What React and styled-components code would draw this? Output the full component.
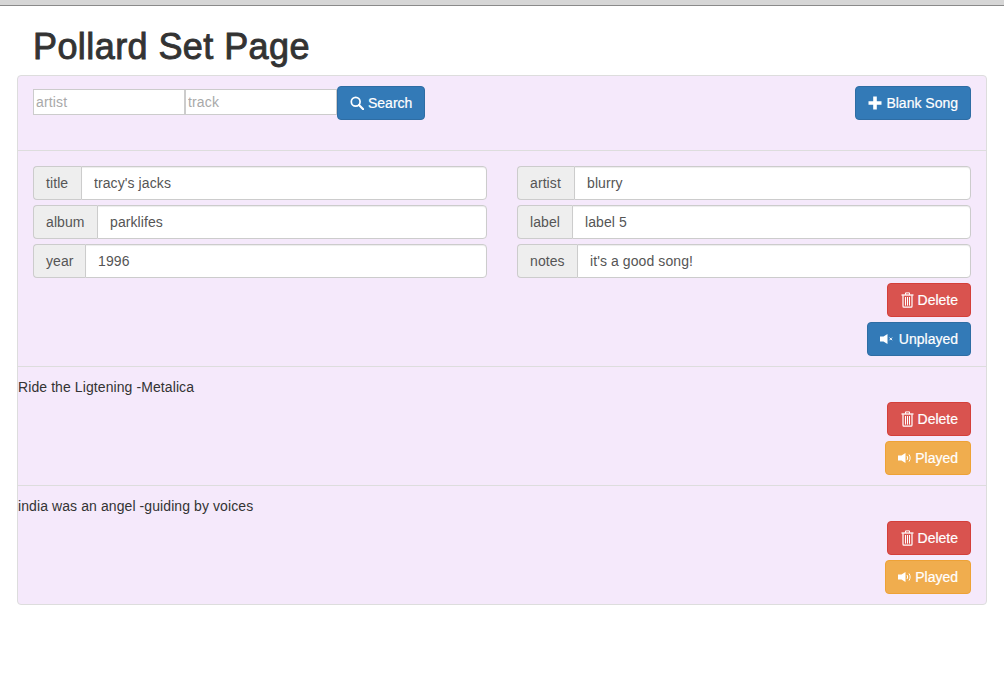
import React from "react";
import styled, { createGlobalStyle } from "styled-components";

const Global = createGlobalStyle`
  html, body { margin: 0; padding: 0; background: #fff; }
  body { font-family: "Liberation Sans", Arial, sans-serif; font-size: 14px; line-height: 20px; color: #333; letter-spacing: 0.09px; }
  * { box-sizing: border-box; }
`;

const TopBar = styled.div`
  height: 6px;
  background: #d6d6d6;
  border-bottom: 1px solid #8a8a8a;
`;
const Page = styled.div`
  padding: 0 17px;
  height: 676px;
`;
const Title = styled.h1`
  margin: 0;
  padding: 21px 16px 8px;
  font-size: 36px;
  line-height: 40px;
  font-weight: 400;
  color: #333;
  -webkit-text-stroke: 0.9px #333;
  letter-spacing: 0.42px;
`;
const Panel = styled.div`
  background: #f5e9fb;
  border: 1px solid #ddd;
  border-radius: 4px;
`;
const SearchSection = styled.section`
  display: flex;
  justify-content: space-between;
  align-items: flex-start;
  padding: 10px 15px 30px;
  border-bottom: 1px solid #ddd;
`;
const SearchForm = styled.div`
  display: flex;
  align-items: flex-start;
`;
const SearchInput = styled.input`
  width: 152px;
  height: 26px;
  margin-top: 3px;
  padding: 1px 2px;
  border: 1px solid #ccc;
  background: #fff;
  font: 14px "Liberation Sans", Arial, sans-serif;
  letter-spacing: 0.15px;
  outline: none;
  &::placeholder { color: #a9a9a9; opacity: 1; }
`;
const Song = styled.section`
  padding: 10px 15px 10px;
  border-bottom: ${p => (p.$last ? "none" : "1px solid #ddd")};
`;
const EditSong = styled(Song)`
  padding: 15px 15px 10px;
`;
const SongLine = styled.div`
  margin: 0 -15px;
  height: 20px;
  color: #333;
`;
const Fields = styled.div`
  display: grid;
  grid-template-columns: 1fr 1fr;
  column-gap: 30px;
  row-gap: 5px;
`;
const Group = styled.div`
  display: flex;
  height: 34px;
`;
const Addon = styled.span`
  flex: none;
  width: ${p => p.$width}px;
  padding: 6px 0 6px 12px;
  background: #eee;
  border: 1px solid #ccc;
  border-right: none;
  border-radius: 4px 0 0 4px;
  color: #555;
`;
const Field = styled.input`
  flex: 1;
  min-width: 0;
  padding: 6px 12px;
  border: 1px solid #ccc;
  border-radius: 0 4px 4px 0;
  background: #fff;
  color: #555;
  font: 14px/20px "Liberation Sans", Arial, sans-serif;
  letter-spacing: 0.09px;
  box-shadow: inset 0 1px 1px rgba(0, 0, 0, 0.075);
  outline: none;
`;
const Actions = styled.div`
  display: flex;
  flex-direction: column;
  align-items: flex-end;
  gap: 5px;
  margin-top: 5px;
`;
const variants = {
  primary: ["#337ab7", "#2e6da4"],
  danger: ["#d9534f", "#d43f3a"],
  warning: ["#f0ad4e", "#eea236"],
};
const Button = styled.button`
  display: inline-flex;
  align-items: center;
  justify-content: center;
  gap: ${p => p.$gap ?? 4}px;
  height: 34px;
  padding: 0 12px;
  border: 1px solid ${p => variants[p.$variant][1]};
  border-radius: 4px;
  background: ${p => variants[p.$variant][0]};
  color: #fff;
  font: 14px/20px "Liberation Sans", Arial, sans-serif;
  -webkit-text-stroke: 0.2px #fff;
  white-space: nowrap;
`;

const Icon = styled.svg`
  display: block;
  flex: none;
`;
const SearchIcon = () => (
  <Icon width="14" height="14" viewBox="0 0 14 14" fill="none" stroke="#fff" strokeWidth="1.7">
    <circle cx="5.7" cy="5.7" r="4.4" />
    <path d="M9 9l4.2 4.2" strokeWidth="2.2" strokeLinecap="round" />
  </Icon>
);
const PlusIcon = () => (
  <Icon width="14" height="14" viewBox="0 0 14 14" fill="#fff">
    <path d="M5.2 .5h3.600v4.700h4.700v3.600H8.800v4.700H5.200V8.800H.5V5.200h4.700z" />
  </Icon>
);
const TrashIcon = () => (
  <Icon width="14" height="16" viewBox="-1 0 14 16" fill="none" stroke="#fff">
    <path d="M.5 3h12" strokeWidth="1.3" />
    <path d="M4.500 2.800V.9h4v1.900" strokeWidth="1" />
    <path d="M2 3.300V14.300c0 .5.3.9.800.900h7.400c.5 0 .8-.4.800-.9V3.300" strokeWidth="1.200" />
    <path d="M4.500 5v8.600M6.500 5v8.600M8.500 5v8.600" strokeWidth="1" />
  </Icon>
);
const MuteIcon = () => (
  <Icon width="14" height="10" viewBox="0 0 14 10" fill="#fff">
    <path d="M0 2.500h3.500L7.500 0v10L3.500 7.500H0z" />
    <path d="M9.500 3.600l2.600 2.600M12.100 3.600L9.500 6.200" stroke="#fff" strokeWidth="1" fill="none" />
  </Icon>
);
const SoundIcon = () => (
  <Icon width="14" height="10" viewBox="0 0 14 10" fill="#fff">
    <path d="M0 2.500h3.500L7.500 0v10L3.500 7.500H0z" />
    <path d="M9 3c.8 1.200.8 2.800 0 4M11 1.500c1.500 2.200 1.500 4.800 0 7" stroke="#fff" strokeWidth="1" fill="none" />
  </Icon>
);

const DeleteButton = () => (
  <Button $variant="danger"><TrashIcon />Delete</Button>
);
const PlayedButton = () => (
  <Button $variant="warning" $gap={3}><SoundIcon />Played</Button>
);

const fields = [
  ["title", "tracy's jacks", 48],
  ["artist", "blurry", 57],
  ["album", "parklifes", 64],
  ["label", "label 5", 55],
  ["year", "1996", 52],
  ["notes", "it's a good song!", 60],
];
const songs = ["Ride the Ligtening -Metalica", "india was an angel -guiding by voices"];

export default function App() {
  return (
    <>
      <Global />
      <TopBar />
      <Page>
        <Title>Pollard Set Page</Title>
        <Panel>
          <SearchSection>
            <SearchForm>
              <SearchInput placeholder="artist" />
              <SearchInput placeholder="track" />
              <Button $variant="primary"><SearchIcon />Search</Button>
            </SearchForm>
            <Button $variant="primary"><PlusIcon />Blank Song</Button>
          </SearchSection>
          <EditSong>
            <Fields>
              {fields.map(([label, value, width]) => (
                <Group key={label}>
                  <Addon $width={width}>{label}</Addon>
                  <Field defaultValue={value} />
                </Group>
              ))}
            </Fields>
            <Actions>
              <DeleteButton />
              <Button $variant="primary" $gap={5}><MuteIcon />Unplayed</Button>
            </Actions>
          </EditSong>
          {songs.map((song, i) => (
            <Song key={song} $last={i === songs.length - 1}>
              <SongLine>{song}</SongLine>
              <Actions>
                <DeleteButton />
                <PlayedButton />
              </Actions>
            </Song>
          ))}
        </Panel>
      </Page>
    </>
  );
}
